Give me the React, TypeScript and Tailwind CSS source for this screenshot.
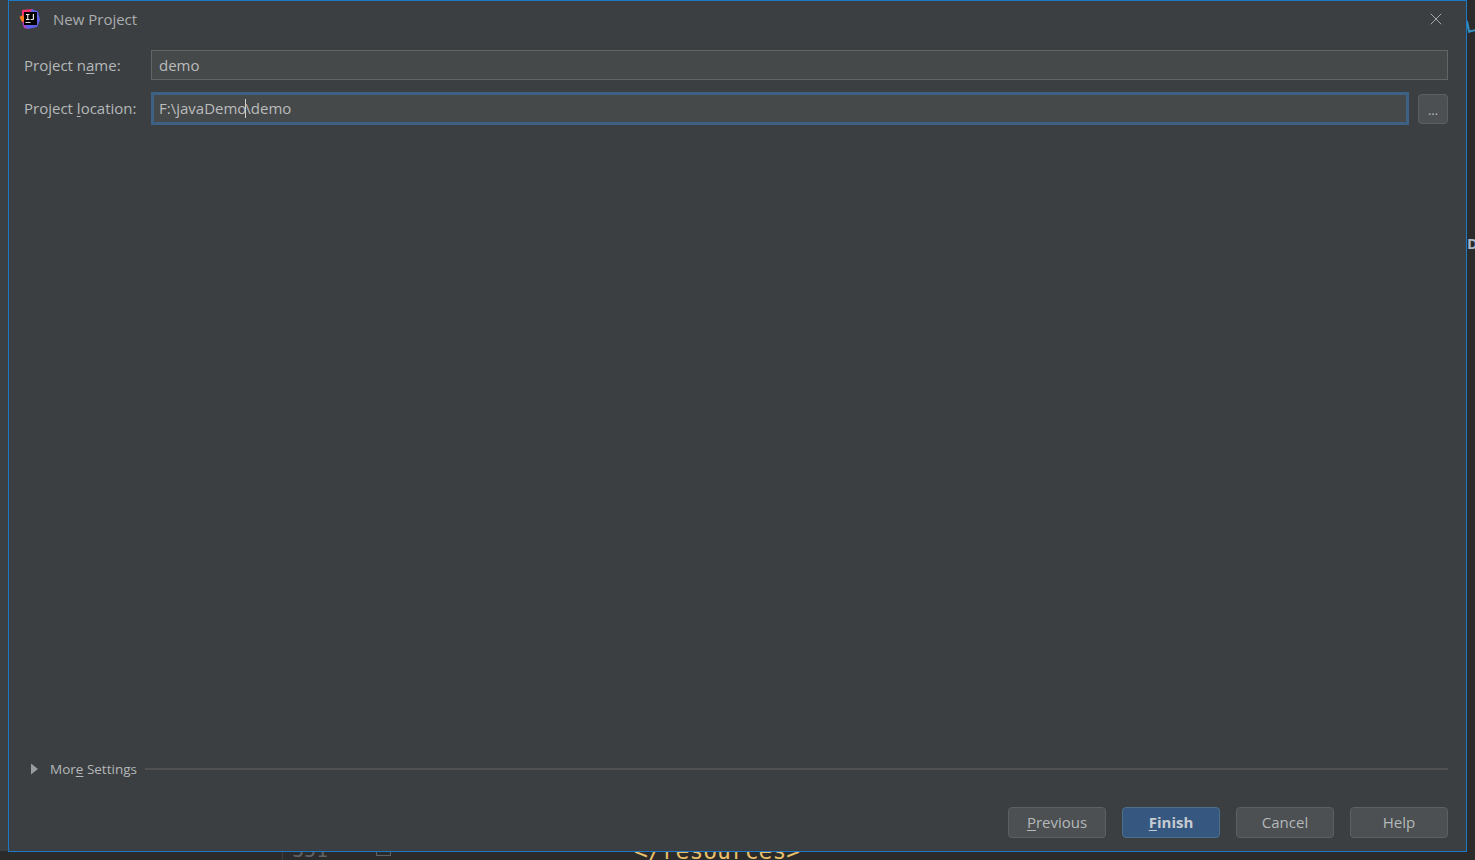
import React from 'react';
import { X } from 'lucide-react';

const font = 'font-["Open_Sans","Noto_Sans",sans-serif]';

const IdeaLogo = () => (
  <svg width="22" height="22" viewBox="0 0 22 22">
    <path d="M3 2 L13 1 L15 5 L5 17 L3 12 Z" fill="#f5316f" />
    <path d="M0.5 9 L4 7 L6 12 L3 14 Z" fill="#fc801d" />
    <path d="M13 1 L19 3.5 L21 12 L18 19 L9 21 L4 17 Z" fill="#5d60e8" />
    <path d="M3 13 L9 21 L5 20 Z" fill="#b13fc0" />
    <rect x="5" y="4" width="13" height="13" fill="#000" />
    <rect x="6.5" y="14" width="5" height="1" fill="#ddd" />
    <path d="M7 6 H10.5 V7 H9.3 V11 H10.5 V12 H7 V11 H8.2 V7 H7 Z M11.5 6 H15 V11 Q15 12 13.8 12 H11.5 V11 H13.8 V6 Z" fill="#eee" />
  </svg>
);

const Btn = ({ children, primary }: { children: React.ReactNode; primary?: boolean }) => (
  <button
    className={`w-[98px] h-[31px] rounded-[4px] border text-[15px] leading-none ${
      primary
        ? 'bg-[#365880] border-[#4c708c] text-[#c6ccd2] font-bold'
        : 'bg-[#4c5052] border-[#5e6060] text-[#b4b8ba]'
    }`}
  >
    {children}
  </button>
);

export default function App() {
  return (
    <div className={`relative w-[1475px] h-[860px] overflow-hidden bg-[#2b2b2b] ${font}`}>
      {/* editor window peeking out behind the dialog */}
      <div className="absolute left-0 top-0 w-[8px] h-[851px] bg-[#3c3f41]" />
      <div className="absolute left-[282px] top-[851px] w-px h-[9px] bg-[#3c3f41]" />
      <span className="absolute left-[292px] top-[838px] text-[20px] leading-[24px] text-[#606366] font-['DejaVu_Sans_Mono',monospace]">351</span>
      <div className="absolute left-[376px] top-[851px] w-[15px] h-[5px] border border-t-0 border-[#606366]" />
      <span className="absolute left-[634px] top-[837px] text-[23px] leading-[28px] text-[#e8bf6a] font-['DejaVu_Sans_Mono',monospace]">&lt;/resources&gt;</span>
      <div className="absolute left-[1467px] top-[234px] text-[15px] leading-[18px] font-bold text-[#a9b7c6]">D</div>
      <div className="absolute left-[1467px] top-[20px] w-2 h-3 border-l-2 border-b-2 border-[#3592c4] -rotate-12" />

      {/* dialog */}
      <div className="absolute left-[8px] top-0 w-[1459px] h-[852px] border border-[#1e78c8] bg-[#3c3f41] flex flex-col text-[#b4b8ba] text-[15px]">
        <div className="h-[36px] flex items-center pl-[10px] pr-[20px] shrink-0">
          <IdeaLogo />
          <span className="ml-[12px] text-[#a9adaf]">New Project</span>
          <X size={20} strokeWidth={1.2} className="ml-auto text-[#a8a8a8]" />
        </div>

        <div className="mt-[13px] flex items-center pl-[15px] pr-[18px]">
          <label className="w-[127px] shrink-0">Project n<span className="underline underline-offset-2">a</span>me:</label>
          <div className="flex-1 h-[30px] flex items-center px-[7px] bg-[#45494a] border border-[#646464] text-[#bbbbbb]">demo</div>
        </div>

        <div className="mt-[12px] flex items-center pl-[15px] pr-[18px]">
          <label className="w-[127px] shrink-0">Project <span className="underline underline-offset-2">l</span>ocation:</label>
          <div className="w-[1258px] h-[33px] flex items-center px-[5px] bg-[#45494a] border-[3px] border-[#3d6185] text-[#bbbbbb]">
            <span>F:\javaDemo</span>
            <span className="w-px h-[19px] -mx-px bg-[#d0d0d0]" />
            <span>\demo</span>
          </div>
          <button className="ml-[9px] w-[30px] h-[30px] rounded-[4px] bg-[#4c5052] border border-[#5e6060] text-[#b4b8ba] text-[13px] leading-none pt-[4px]">...</button>
        </div>

        <div className="mt-auto flex items-center pl-[22px] pr-[18px]">
          <svg width="8" height="12" viewBox="0 0 8 12" className="shrink-0">
            <path d="M0 0.5 L7 6 L0 11.5 Z" fill="#9a9d9f" />
          </svg>
          <span className="ml-[11px] text-[13.5px] whitespace-nowrap">Mor<span className="underline underline-offset-2">e</span> Settings</span>
          <div className="ml-[8px] flex-1 h-[2px] bg-[#515151]" />
        </div>

        <div className="mt-[28px] mb-[13px] flex justify-end gap-[16px] pr-[18px]">
          <Btn><span className="underline underline-offset-2">P</span>revious</Btn>
          <Btn primary><span className="underline underline-offset-2">F</span>inish</Btn>
          <Btn>Cancel</Btn>
          <Btn>Help</Btn>
        </div>
      </div>
    </div>
  );
}
